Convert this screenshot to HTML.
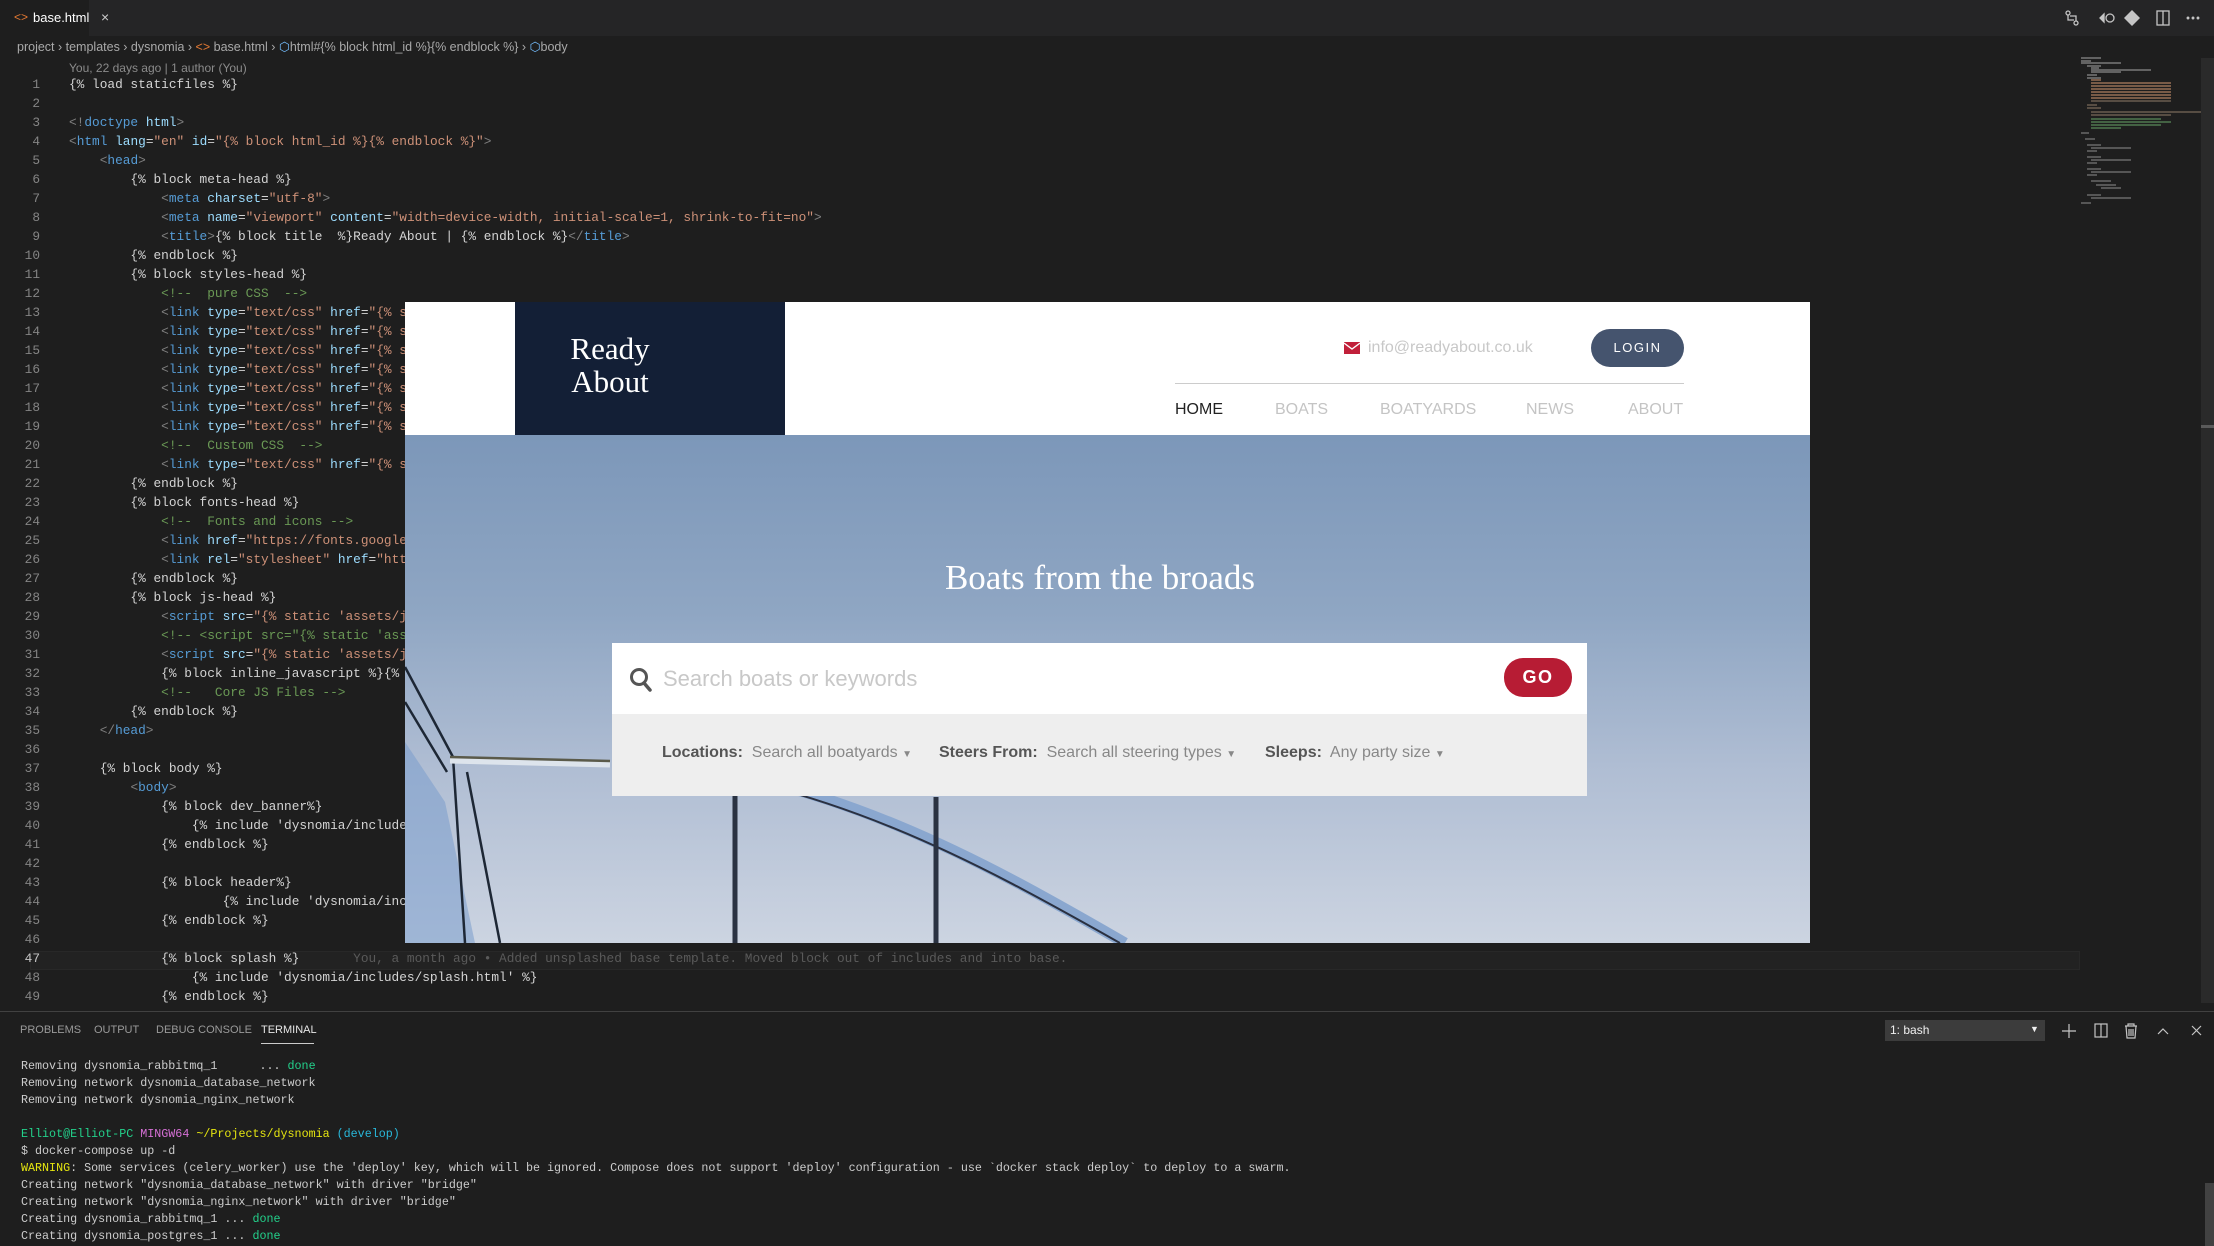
<!DOCTYPE html>
<html><head><meta charset="utf-8">
<style>
*{margin:0;padding:0;box-sizing:border-box}
body{width:2214px;height:1246px;background:#1e1e1e;position:relative;overflow:hidden;font-family:"Liberation Sans",sans-serif}
.a{position:absolute;white-space:pre}
.code{font-family:"Liberation Mono",monospace;font-size:12.8px;color:#d4d4d4}
.ln{font-family:"Liberation Mono",monospace;font-size:12.8px;color:#858585;text-align:right;width:40px}
.t{color:#569cd6}.b{color:#808080}.at{color:#9cdcfe}.s{color:#ce9178}.c{color:#6a9955}
.term{font-family:"Liberation Mono",monospace;font-size:11.7px;color:#cccccc}
.g{color:#23d18b}
.f{font-size:16px;color:#888}.f b{color:#555}
</style></head><body>
<div class="a" style="left:0;top:0;width:2214px;height:36px;background:#252526"></div>
<div class="a" style="left:0;top:0;width:89px;height:36px;background:#1e1e1e"></div>
<div class="a" style="left:14px;top:10px;font-size:12px;color:#e37933">&lt;&gt;</div>
<div class="a" style="left:33px;top:10px;font-size:13px;color:#fff">base.html</div>
<div class="a" style="left:101px;top:9px;font-size:14px;color:#ccc">×</div>
<svg class="a" style="left:2060px;top:8px" width="150" height="20" viewBox="0 0 150 20" fill="none" stroke="#c5c5c5" stroke-width="1.3">
<circle cx="8" cy="5" r="2"/><circle cx="16" cy="15" r="2"/><path d="M8 7v5h6M16 13V8h-6"/>
<path d="M40 10l4-4v8z" fill="#c5c5c5"/><circle cx="50" cy="10" r="4"/>
<path d="M72 2l8 8-8 8-8-8z" fill="#c5c5c5" stroke="none"/>
<rect x="97" y="3" width="12" height="14"/><path d="M103 3v14"/>
<circle cx="128" cy="10" r=".8" fill="#c5c5c5"/><circle cx="133" cy="10" r=".8" fill="#c5c5c5"/><circle cx="138" cy="10" r=".8" fill="#c5c5c5"/>
</svg>
<div class="a" style="left:17px;top:39px;font-size:12.5px;color:#a9a9a9">project › templates › dysnomia › <span style="color:#e37933">&lt;&gt;</span> base.html › <span style="color:#75beff">⬡</span>html#{% block html_id %}{% endblock %} › <span style="color:#75beff">⬡</span>body</div>
<div class="a" style="left:69px;top:61px;font-size:12px;color:#8b8b8b">You, 22 days ago | 1 author (You)</div>
<div class="a" style="left:30px;top:951px;width:2050px;height:19px;border:1px solid #282828;background:#222"></div>
<div id="code"></div>
<svg class="a" style="left:2076px;top:55px" width="125" height="150">
<g stroke-width="1.3">
<path d="M5 3h20M5 6h10M5 8h40M11 11h14M15 13h8M15 15h60M15 17h30M11 20h10M11 23h14" stroke="#8a8a8a"/>
<path d="M15 25h10M15 28h80M15 31h80M15 34h80M15 37h80M15 40h80M15 43h80" stroke="#b08060"/>
<path d="M15 46h80M11 50h10M11 53h14M15 57h120M15 60h80" stroke="#7a6a5a"/>
<path d="M15 64h70M15 67h80M15 70h70M15 73h30" stroke="#5a8a5a"/>
<path d="M5 78h8M9 84h10M11 90h14M15 93h40M11 96h10M11 102h14M15 105h40M11 108h10M11 114h14M15 117h40M11 120h10M15 126h20M20 130h20M25 133h20M11 140h14M15 143h40M5 148h10" stroke="#777"/>
</g></svg>
<div class="a" style="left:2201px;top:58px;width:13px;height:945px;background:#2a2a2a"></div>
<div class="a" style="left:2201px;top:425px;width:13px;height:3px;background:#5a5a5a"></div>
<div class="a" style="left:0;top:1011px;width:2214px;height:1px;background:#414141"></div>
<div class="a" style="left:20px;top:1024px;font-size:11px;color:#9a9a9a">PROBLEMS</div>
<div class="a" style="left:94px;top:1024px;font-size:11px;color:#9a9a9a">OUTPUT</div>
<div class="a" style="left:156px;top:1024px;font-size:11px;color:#9a9a9a">DEBUG CONSOLE</div>
<div class="a" style="left:261px;top:1024px;font-size:11px;color:#e7e7e7">TERMINAL</div>
<div class="a" style="left:261px;top:1043px;width:53px;height:1px;background:#ccc"></div>
<div class="a" style="left:1885px;top:1020px;width:160px;height:21px;background:#3c3c3c"></div>
<div class="a" style="left:1890px;top:1023px;font-size:12px;color:#f0f0f0">1: bash</div>
<div class="a" style="left:2030px;top:1024px;font-size:9px;color:#f0f0f0">▼</div>
<svg class="a" style="left:2055px;top:1020px" width="150" height="22" fill="none" stroke="#c5c5c5" stroke-width="1.2">
<path d="M14 4v14M7 11h14"/><rect x="40" y="4" width="12" height="13"/><path d="M46 4v13"/>
<path d="M70 6h12M73 6V4h6v2M71 6l1 12h8l1-12M74 9v7M76 9v7M78 9v7"/>
<path d="M103 14l5-5 5 5"/><path d="M137 6l9 9M146 6l-9 9"/></svg>
<div class="a" style="left:2205px;top:1183px;width:9px;height:63px;background:#424242"></div>
<div class="a term" style="left:21px;top:1058px;line-height:17px">Removing dysnomia_rabbitmq_1      ... <span class="g">done</span>
Removing network dysnomia_database_network
Removing network dysnomia_nginx_network

<span class="g">Elliot@Elliot-PC</span> <span style="color:#d670d6">MINGW64</span> <span style="color:#e5e510">~/Projects/dysnomia</span> <span style="color:#29b8db">(develop)</span>
$ docker-compose up -d
<span style="color:#e5e510">WARNING</span>: Some services (celery_worker) use the 'deploy' key, which will be ignored. Compose does not support 'deploy' configuration - use `docker stack deploy` to deploy to a swarm.
Creating network "dysnomia_database_network" with driver "bridge"
Creating network "dysnomia_nginx_network" with driver "bridge"
Creating dysnomia_rabbitmq_1 ... <span class="g">done</span>
Creating dysnomia_postgres_1 ... <span class="g">done</span></div>

<div class="a" style="left:405px;top:302px;width:1405px;height:641px;overflow:hidden;background:#fff">
  <div class="a" style="left:110px;top:0;width:270px;height:133px;background:#131f36"></div>
  <div class="a" style="left:110px;top:30px;width:190px;text-align:center;font-family:'Liberation Serif',serif;font-size:31px;line-height:33px;color:#fff;white-space:normal">Ready<br>About</div>
  <svg class="a" style="left:939px;top:40px" width="16" height="12"><rect width="16" height="12" fill="#c1203a"/><path d="M0 1l8 6 8-6" stroke="#fff" stroke-width="1.3" fill="none"/></svg>
  <div class="a" style="left:963px;top:37px;font-size:16px;color:#c8c8c8">info@readyabout.co.uk</div>
  <div class="a" style="left:1186px;top:27px;width:93px;height:38px;border-radius:19px;background:#45546e;color:#fff;font-size:13px;letter-spacing:1.5px;text-align:center;line-height:38px">LOGIN</div>
  <div class="a" style="left:770px;top:81px;width:509px;height:1px;background:#ccc"></div>
  <div class="a" style="left:770px;top:99px;font-size:16px;color:#222">HOME</div>
  <div class="a" style="left:870px;top:99px;font-size:16px;color:#c4c4c4">BOATS</div>
  <div class="a" style="left:975px;top:99px;font-size:16px;color:#c4c4c4">BOATYARDS</div>
  <div class="a" style="left:1121px;top:99px;font-size:16px;color:#c4c4c4">NEWS</div>
  <div class="a" style="left:1223px;top:99px;font-size:16px;color:#c4c4c4">ABOUT</div>
  <div class="a" style="left:0;top:133px;width:1405px;height:508px;background:linear-gradient(180deg,#7c97b9 0%,#8fa6c3 35%,#afbdd3 65%,#ccd4e1 100%)"></div>
  <svg class="a" style="left:0;top:133px" width="1405" height="508" viewBox="0 133 1405 508" fill="none">
    <path d="M0 440 L40 500 L70 641 L0 641Z" fill="#7a9ccc" opacity=".55"/>
    <path d="M0 365 L48 455 M48 455 L60 641 M0 400 L42 470 M62 470 L95 641" stroke="#1d2735" stroke-width="2.5"/>
    <path d="M45 458 L205 462" stroke="#dde4ec" stroke-width="7"/>
    <path d="M45 455 L205 459" stroke="#5a5a4a" stroke-width="2.5"/>
    <path d="M216 456 C420 470 580 560 720 641" stroke="#8aa7cf" stroke-width="11"/>
    <path d="M216 460 C420 474 580 565 715 641" stroke="#2a3040" stroke-width="2"/>
    <path d="M330 493 V641 M531 495 V641" stroke="#2a3242" stroke-width="5"/>
  </svg>
  <div class="a" style="left:0;top:256px;width:1390px;text-align:center;font-family:'Liberation Serif',serif;font-size:35px;color:#fff">Boats from the broads</div>
  <div class="a" style="left:207px;top:341px;width:975px;height:71px;background:#fff"></div>
  <svg class="a" style="left:224px;top:365px" width="26" height="26"><circle cx="10" cy="10" r="7.5" stroke="#555" stroke-width="3" fill="none"/><path d="M15 16l6 7" stroke="#555" stroke-width="3.5" stroke-linecap="round"/></svg>
  <div class="a" style="left:258px;top:364px;font-size:22px;color:#c8c8c8">Search boats or keywords</div>
  <div class="a" style="left:1099px;top:356px;width:68px;height:39px;border-radius:19px;background:#b71c34;color:#fff;font-weight:bold;font-size:18px;letter-spacing:1.5px;text-align:center;line-height:39px">GO</div>
  <div class="a" style="left:207px;top:412px;width:975px;height:82px;background:#eeeeee"></div>
  <div class="a f" style="left:257px;top:442px"><b>Locations:</b>  Search all boatyards <span style="font-size:10px">▼</span></div>
  <div class="a f" style="left:534px;top:442px"><b>Steers From:</b>  Search all steering types <span style="font-size:10px">▼</span></div>
  <div class="a f" style="left:860px;top:442px"><b>Sleeps:</b>  Any party size <span style="font-size:10px">▼</span></div>
</div>
<script>
const L=[
'{% load staticfiles %}','',
'<b>&lt;!</b><t>doctype</t> <at>html</at><b>&gt;</b>',
'<b>&lt;</b><t>html</t> <at>lang</at>=<s>"en"</s> <at>id</at>=<s>"{% block html_id %}{% endblock %}"</s><b>&gt;</b>',
'    <b>&lt;</b><t>head</t><b>&gt;</b>',
'        {% block meta-head %}',
'            <b>&lt;</b><t>meta</t> <at>charset</at>=<s>"utf-8"</s><b>&gt;</b>',
'            <b>&lt;</b><t>meta</t> <at>name</at>=<s>"viewport"</s> <at>content</at>=<s>"width=device-width, initial-scale=1, shrink-to-fit=no"</s><b>&gt;</b>',
'            <b>&lt;</b><t>title</t><b>&gt;</b>{% block title  %}Ready About | {% endblock %}<b>&lt;/</b><t>title</t><b>&gt;</b>',
'        {% endblock %}','        {% block styles-head %}',
'            <c>&lt;!--  pure CSS  --&gt;</c>'];
for(let i=0;i<7;i++)L.push('            <b>&lt;</b><t>link</t> <at>type</at>=<s>"text/css"</s> <at>href</at>=<s>"{% s</s>');
L.push('            <c>&lt;!--  Custom CSS  --&gt;</c>','            <b>&lt;</b><t>link</t> <at>type</at>=<s>"text/css"</s> <at>href</at>=<s>"{% s</s>',
'        {% endblock %}','        {% block fonts-head %}','            <c>&lt;!--  Fonts and icons --&gt;</c>',
'            <b>&lt;</b><t>link</t> <at>href</at>=<s>"https://fonts.google</s>','            <b>&lt;</b><t>link</t> <at>rel</at>=<s>"stylesheet"</s> <at>href</at>=<s>"htt</s>',
'        {% endblock %}','        {% block js-head %}','            <b>&lt;</b><t>script</t> <at>src</at>=<s>"{% static \'assets/j</s>',
'            <c>&lt;!-- &lt;script src="{% static \'ass</c>','            <b>&lt;</b><t>script</t> <at>src</at>=<s>"{% static \'assets/j</s>',
'            {% block inline_javascript %}{%','            <c>&lt;!--   Core JS Files --&gt;</c>','        {% endblock %}',
'    <b>&lt;/</b><t>head</t><b>&gt;</b>','','    {% block body %}','        <b>&lt;</b><t>body</t><b>&gt;</b>',
'            {% block dev_banner%}','                {% include \'dysnomia/include','            {% endblock %}','',
'            {% block header%}','                    {% include \'dysnomia/inc','            {% endblock %}','',
'            {% block splash %}       <span style="color:#5a5a5a">You, a month ago • Added unsplashed base template. Moved block out of includes and into base.</span>',
'                {% include \'dysnomia/includes/splash.html\' %}','            {% endblock %}');
let h='';
L.forEach((l,i)=>{const y=77+19*i;
h+=`<div class="a ln" style="left:0;top:${y}px;${i==46?'color:#c6c6c6':''}">${i+1}</div>`;
l=l.replace(/<t>/g,'<span class="t">').replace(/<\/t>/g,'</span>').replace(/<at>/g,'<span class="at">').replace(/<\/at>/g,'</span>').replace(/<s>/g,'<span class="s">').replace(/<\/s>/g,'</span>').replace(/<c>/g,'<span class="c">').replace(/<\/c>/g,'</span>').replace(/<b>/g,'<span class="b">').replace(/<\/b>/g,'</span>');
h+=`<div class="a code" style="left:69px;top:${y}px">${l}</div>`;});
document.getElementById('code').innerHTML=h;
</script>
</body></html>
